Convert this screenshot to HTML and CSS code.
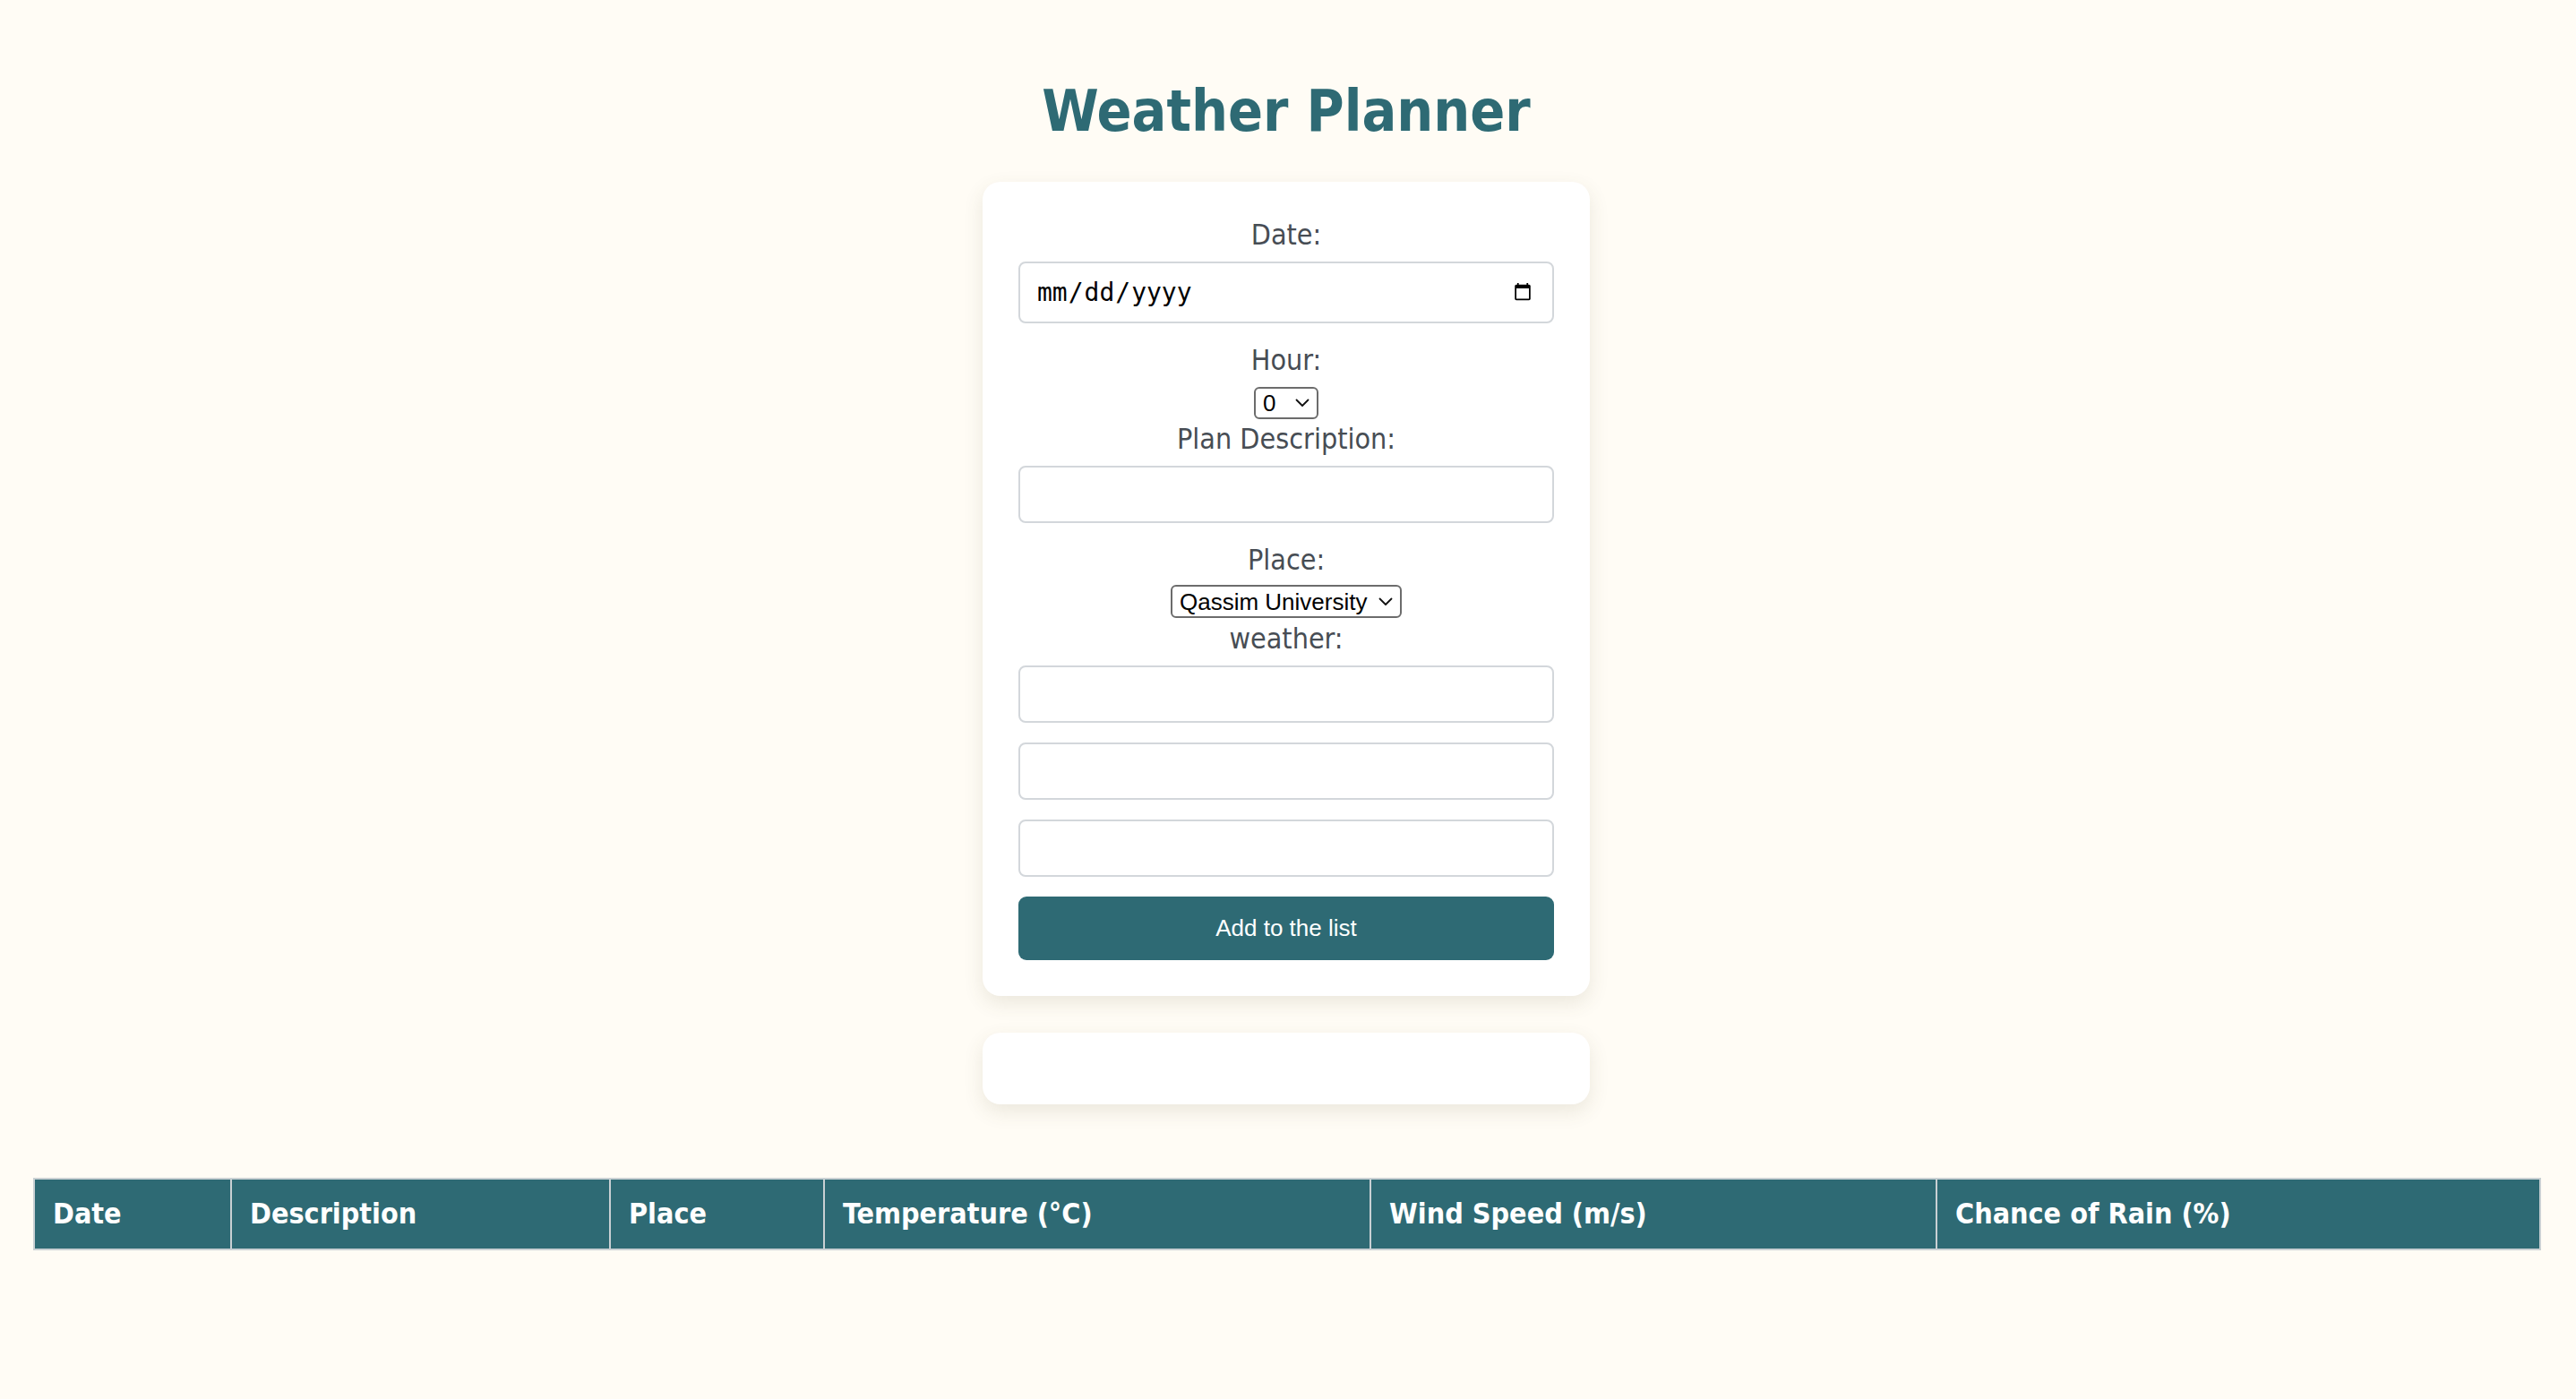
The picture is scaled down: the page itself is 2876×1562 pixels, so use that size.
FILE: index.html
```html
<!DOCTYPE html>
<html lang="en">
<head>
<meta charset="utf-8">
<title>Weather Planner</title>
<link rel="stylesheet" href="styles.css">
</head>
<body>
  <h1 class="title">Weather Planner</h1>

  <form class="card planner-form">
    <label class="field-label" for="date">Date:</label>
    <input class="field field-date" type="date" id="date">

    <label class="field-label" for="hour">Hour:</label>
    <div class="select-row">
      <span class="select-box select-hour">
        <select id="hour" class="select-native">
          <option>0</option><option>1</option><option>2</option><option>3</option>
          <option>4</option><option>5</option><option>6</option><option>7</option>
          <option>8</option><option>9</option><option>10</option><option>11</option>
          <option>12</option><option>13</option><option>14</option><option>15</option>
          <option>16</option><option>17</option><option>18</option><option>19</option>
          <option>20</option><option>21</option><option>22</option><option>23</option>
        </select>
        <svg class="chevron" width="16" height="10" viewBox="0 0 16 10"><path d="M1.5 1.5 L8 8 L14.5 1.5" fill="none" stroke="#111" stroke-width="1.8" stroke-linecap="round" stroke-linejoin="round"/></svg>
      </span>
    </div>

    <label class="field-label" for="desc">Plan Description:</label>
    <input class="field" type="text" id="desc">

    <label class="field-label" for="place">Place:</label>
    <div class="select-row">
      <span class="select-box select-place">
        <select id="place" class="select-native">
          <option>Qassim University</option>
        </select>
        <svg class="chevron" width="16" height="10" viewBox="0 0 16 10"><path d="M1.5 1.5 L8 8 L14.5 1.5" fill="none" stroke="#111" stroke-width="1.8" stroke-linecap="round" stroke-linejoin="round"/></svg>
      </span>
    </div>

    <label class="field-label" for="w1">weather:</label>
    <input class="field" type="text" id="w1">
    <input class="field" type="text" id="w2">
    <input class="field" type="text" id="w3">

    <button class="add-btn" type="button">Add to the list</button>
  </form>

  <div class="card result-card"></div>

  <table class="plan-table">
    <colgroup>
      <col class="c-date">
      <col class="c-desc">
      <col class="c-place">
      <col class="c-temp">
      <col class="c-wind">
      <col class="c-rain">
    </colgroup>
    <thead>
      <tr>
        <th>Date</th>
        <th>Description</th>
        <th>Place</th>
        <th>Temperature (°C)</th>
        <th>Wind Speed (m/s)</th>
        <th>Chance of Rain (%)</th>
      </tr>
    </thead>
    <tbody></tbody>
  </table>
</body>
</html>
```

FILE: styles.css
```css
html, body {
  margin: 0;
  padding: 0;
}

body {
  background: #fffcf5;
  font-family: "DejaVu Sans Condensed", "DejaVu Sans", sans-serif;
  font-stretch: condensed;
  font-size: 32px;
  color: #474d54;
  padding: 40px 4px 0 0;
  min-height: 1562px;
  box-sizing: border-box;
}

.title {
  margin: 43px 0;
  font-size: 64px;
  line-height: 77px;
  padding-top: 3px;
  height: 74px;
  font-weight: bold;
  color: #2e6a74;
  text-align: center;
}

.card {
  width: 678px;
  box-sizing: border-box;
  margin: 0 auto;
  padding: 40px;
  background: #ffffff;
  border-radius: 20px;
  box-shadow: 0 8px 22px rgba(90, 80, 50, 0.12);
}

.planner-form {
  display: flex;
  flex-direction: column;
  align-items: stretch;
  text-align: center;
}

.field-label {
  display: block;
  line-height: 39px;
  margin-bottom: 10px;
  color: #474d54;
}

.field {
  display: block;
  box-sizing: border-box;
  width: 100%;
  height: 64px;
  margin: 0 0 22px 0;
  padding: 0 18px;
  border: 2px solid #d3d7db;
  border-radius: 8px;
  background: #fff;
  font-family: "Liberation Sans", sans-serif;
  font-size: 26px;
  color: #000;
  outline: none;
}

.field-date {
  height: 69px;
  font-family: "DejaVu Sans Mono", "Liberation Mono", monospace;
  font-size: 28px;
  padding: 0 16px 0 18px;
}

.field-date::-webkit-calendar-picker-indicator {
  width: 22px;
  height: 24px;
  padding: 0;
  margin-right: 6px;
}

.select-row {
  height: 39px;
  display: flex;
  justify-content: center;
  align-items: flex-start;
}

.select-box {
  display: flex;
  align-items: center;
  box-sizing: border-box;
  border: 2px solid #6c6c6c;
  border-radius: 6px;
  background: #fff;
}

.select-hour {
  width: 72px;
  height: 36px;
}

.select-place {
  width: 258px;
  height: 37px;
  margin-top: -2px;
}

.select-native {
  appearance: none;
  -webkit-appearance: none;
  border: none;
  background: transparent;
  font-family: "Liberation Sans", Arial, sans-serif;
  font-size: 26px;
  color: #000;
  padding: 0 0 0 8px;
  margin: 0;
  flex: 1;
  min-width: 0;
  height: 100%;
  outline: none;
}

.chevron {
  flex: none;
  margin-right: 8px;
}

.add-btn {
  display: block;
  width: 100%;
  height: 71px;
  border: none;
  border-radius: 9px;
  background: #2e6a74;
  color: #ffffff;
  font-family: "Liberation Sans", Arial, sans-serif;
  font-size: 26px;
  cursor: pointer;
}

.result-card {
  margin-top: 41px;
  height: 79px;
}

.plan-table {
  margin: 82px 37px 0 37px;
  width: 2798px;
  table-layout: fixed;
  border-collapse: collapse;
  border: 2px solid #c9d0d3;
}

.plan-table th {
  background: #2e6a74;
  color: #ffffff;
  font-weight: bold;
  text-align: left;
  font-size: 32px;
  line-height: 39px;
  padding: 19px 20px;
  border: 2px solid #c9d0d3;
}

.c-date { width: 220px; }
.c-desc { width: 423px; }
.c-place { width: 239px; }
.c-temp { width: 610px; }
.c-wind { width: 632px; }
.c-rain { width: 674px; }
```
